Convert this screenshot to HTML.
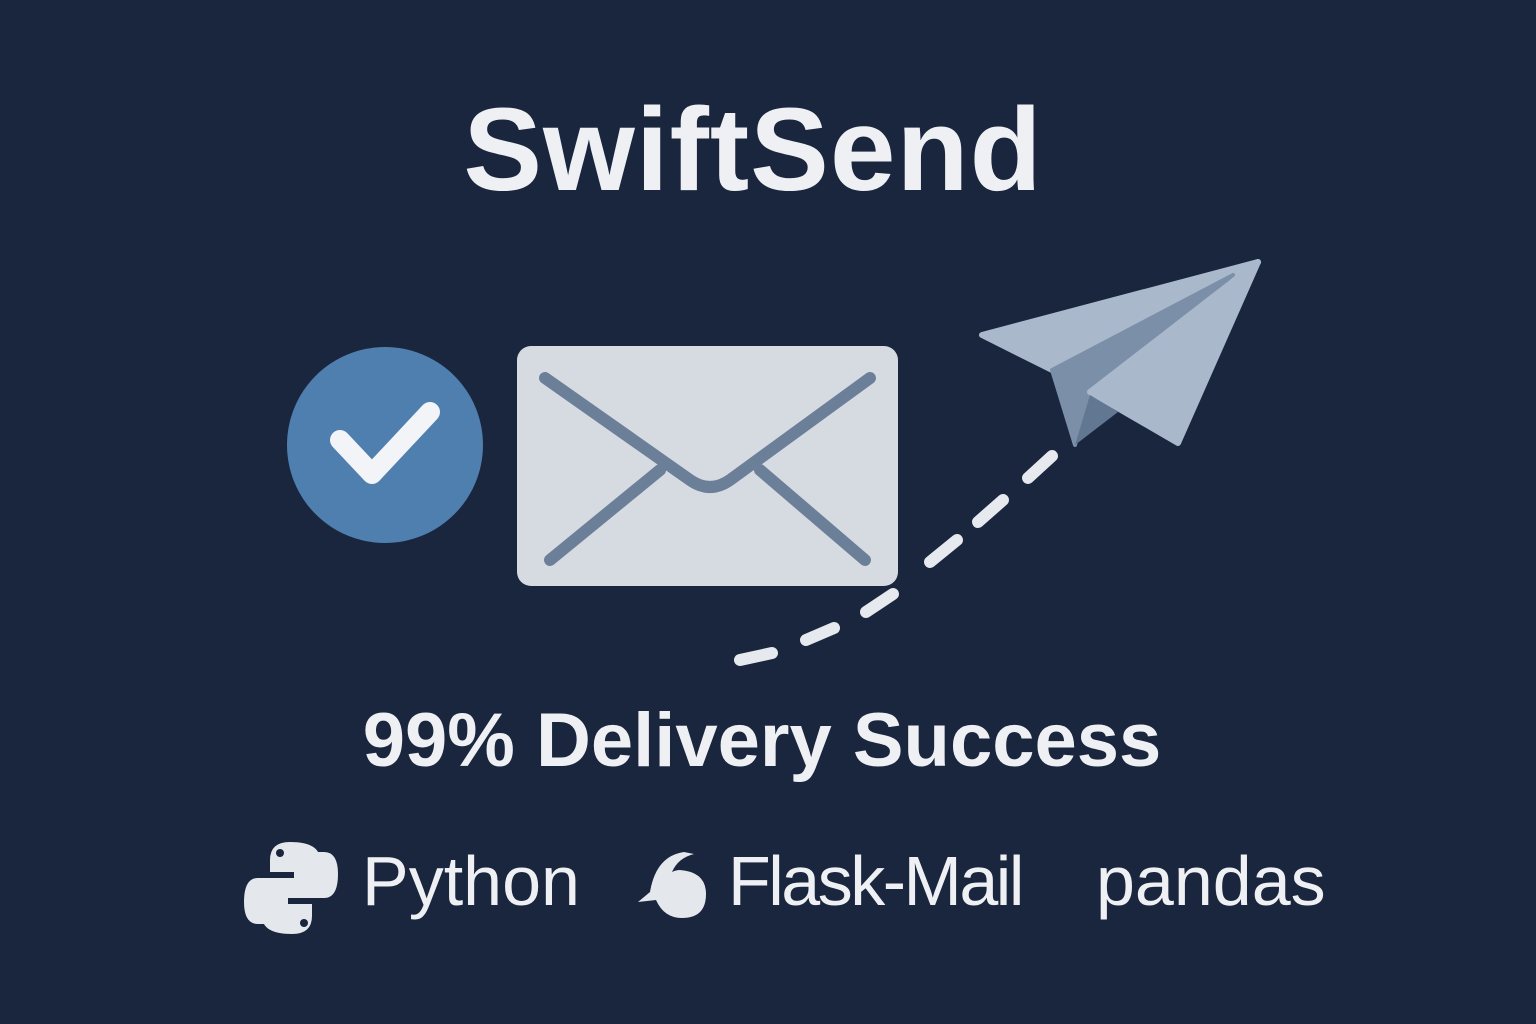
<!DOCTYPE html>
<html><head><style>
body{margin:0;width:1536px;height:1024px;background:#19263e;overflow:hidden;position:relative;font-family:"Liberation Sans",sans-serif;color:#eef0f3}
.t{position:absolute;white-space:nowrap}
</style></head><body>
<div class="t" style="left:0;width:1506px;text-align:center;top:82px;font-size:118px;font-weight:bold;letter-spacing:1px">SwiftSend</div>
<div class="t" style="left:0;width:1524px;text-align:center;top:697px;font-size:76px;font-weight:bold">99% Delivery Success</div>
<div class="t" style="left:362px;top:841px;font-size:70px">Python</div>
<div class="t" style="left:728px;top:841px;font-size:70px;letter-spacing:-2.5px">Flask-Mail</div>
<div class="t" style="left:1096px;top:841px;font-size:70px">pandas</div>
<svg width="1536" height="1024" style="position:absolute;left:0;top:0">
<circle cx="385" cy="445" r="98" fill="#4e7fae"/>
<path d="M340 440 L372 474 L430 412" stroke="#f2f4f7" stroke-width="20" fill="none" stroke-linecap="round" stroke-linejoin="round"/>
<rect x="517" y="346" width="381" height="240" rx="14" fill="#d6dbe2"/>
<path d="M545 378 L690 480 Q710 494 730 480 L870 378 M550 560 L660 470 M865 560 L760 470" stroke="#6b7f98" stroke-width="12" fill="none" stroke-linecap="round" stroke-linejoin="round"/>
<path d="M740 660 L772 653 M806 640 L834 628 M866 612 L893 594 M930 562 L957 540 M978 522 L1003 500 M1028 478 L1052 456" stroke="#e6e9ee" stroke-width="12" stroke-linecap="round"/>
<path d="M982 335 L1258 262 L1052 370 Z" fill="#a9b9cb" stroke="#a9b9cb" stroke-width="6" stroke-linejoin="round"/>
<path d="M1052 370 L1233 275 L1090 392 L1075 445 Z" fill="#7b8fa8" stroke="#7b8fa8" stroke-width="4" stroke-linejoin="round"/>
<path d="M1090 392 L1258 262 L1178 443 Z" fill="#a9b9cb" stroke="#a9b9cb" stroke-width="6" stroke-linejoin="round"/>
<path d="M1090 395 L1075 445 L1118 412 Z" fill="#627791"/>
<g fill="#e4e7ec">
<path d="M290 842 q-20 0 -20 18 v12 h24 v6 h-36 q-14 0 -14 24 q0 22 14 22 h10 v-14 q0 -14 14 -14 h26 q12 0 12 -12 v-24 q0 -18 -30 -18z"/>
<path d="M292 934 q20 0 20 -18 v-12 h-24 v-6 h36 q14 0 14 -24 q0 -22 -14 -22 h-10 v14 q0 14 -14 14 h-26 q-12 0 -12 12 v24 q0 18 30 18z"/>
<circle cx="280" cy="853" r="4" fill="#19263e"/><circle cx="304" cy="923" r="4" fill="#19263e"/>
<path d="M684 852 q-28 4 -34 40 l-12 10 l18 -2 q8 18 26 18 q24 0 24 -24 q0 -22 -26 -24 q-4 0 -8 2 q6 -14 22 -18 z"/>
</g>
</svg>
</body></html>
